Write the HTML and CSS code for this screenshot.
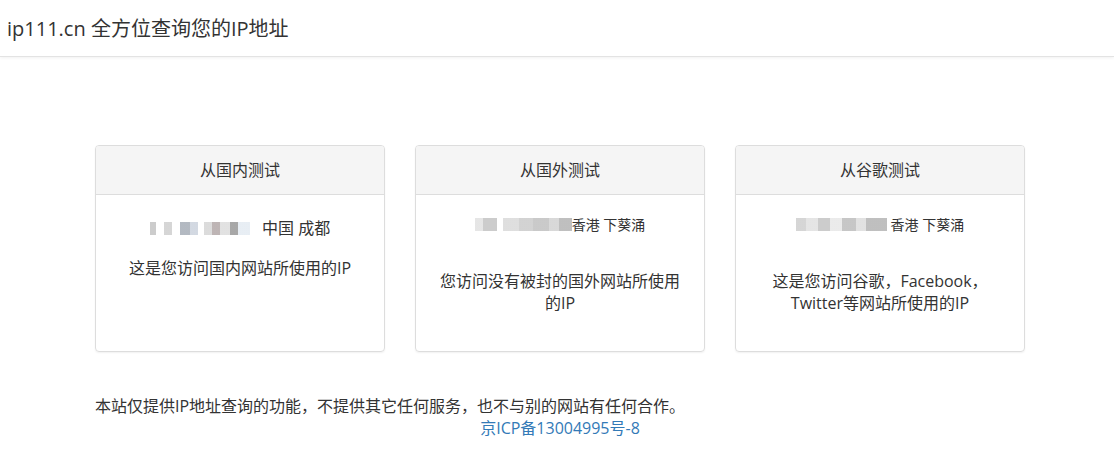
FILE: index.html
```html
<!DOCTYPE html>
<html lang="zh-CN">
<head>
  <meta charset="UTF-8" />
  <title>ip111.cn 全方位查询您的IP地址</title>
  <link rel="stylesheet" href="styles.css">
</head>
<body>
  <div class="topbar">
    <span class="brand">ip111.cn 全方位查询您的IP地址</span>
  </div>

  <div class="container">
    <div class="cards">
      <div class="card">
        <div class="card-head">从国内测试</div>
        <div class="card-body">
          <p class="ip"><span class="mask mask-a"></span> 中国 成都</p>
          <p class="desc">这是您访问国内网站所使用的IP</p>
        </div>
      </div>

      <div class="card">
        <div class="card-head">从国外测试</div>
        <div class="card-body">
          <p class="ip small"><span class="mask mask-b"></span>香港 下葵涌</p>
          <p class="desc far">您访问没有被封的国外网站所使用的IP</p>
        </div>
      </div>

      <div class="card">
        <div class="card-head">从谷歌测试</div>
        <div class="card-body">
          <p class="ip small"><span class="mask mask-c"></span> 香港 下葵涌</p>
          <p class="desc far">这是您访问谷歌，Facebook，<br>Twitter等网站所使用的IP</p>
        </div>
      </div>
    </div>

    <p class="notice">本站仅提供IP地址查询的功能，不提供其它任何服务，也不与别的网站有任何合作。</p>
    <p class="beian"><a href="#">京ICP备13004995号-8</a></p>
  </div>
</body>
</html>
```

FILE: styles.css
```css
body {
  margin: 0;
  background: #fff;
  color: #333;
  font-family: "Open Sans", "Noto Sans CJK SC", sans-serif;
  font-size: 16px;
  line-height: 22px;
}

.topbar {
  height: 57px;
  border-bottom: 1px solid #e3e3e3;
  box-shadow: 0 1px 3px rgba(0, 0, 0, 0.06);
  display: flex;
  align-items: center;
  padding-left: 7px;
  padding-top: 2px;
  box-sizing: border-box;
}

.brand {
  font-size: 20px;
  color: #333;
}

.container {
  width: 930px;
  margin-left: 95px;
  padding-top: 88px;
}

.cards {
  display: grid;
  grid-template-columns: repeat(3, 290px);
  gap: 30px;
}

.card {
  height: 207px;
  border: 1px solid #ddd;
  border-radius: 4px;
  box-shadow: 0 1px 2px rgba(0, 0, 0, 0.06);
  box-sizing: border-box;
  overflow: hidden;
}

.card-head {
  height: 48px;
  background: #f5f5f5;
  border-bottom: 1px solid #ddd;
  display: flex;
  align-items: center;
  justify-content: center;
  font-size: 16px;
}

.card-body {
  text-align: center;
  padding: 22px 20px 0;
}

.card-body p {
  margin: 0;
}

.ip {
  font-size: 16px;
  height: 22px;
}

.ip.small {
  font-size: 14px;
  margin-top: -3px;
}

.mask {
  display: inline-block;
  height: 13px;
  vertical-align: -1px;
  opacity: 0.75;
}

.mask-a {
  width: 108px;
  background: linear-gradient(90deg, #bbb 0 6px, #fff 6px 14px, #c8c8c8 14px 22px, #fff 22px 30px,
    #9aa2ad 30px 40px, #c4ccd8 40px 48px, #fff 48px 54px, #d0d0d0 54px 62px, #a89c9c 62px 70px,
    #d8d8d8 70px 80px, #8a8a8a 80px 88px, #e0e8f0 88px 100px, #fff 100px);
}

.mask-b {
  width: 97px;
  background: linear-gradient(90deg, #ddd 0 8px, #bbb 8px 22px, #fff 22px 28px, #d4d4d4 28px 44px,
    #c4c4c4 44px 58px, #b8b8b8 58px 74px, #ccc 74px 84px, #aaa 84px 97px);
}

.mask-c {
  width: 91px;
  background: linear-gradient(90deg, #c8c8c8 0 10px, #dcdcdc 10px 22px, #bbb 22px 34px, #e4e4e4 34px 46px,
    #b4b4b4 46px 60px, #d8d8d8 60px 70px, #aaa 70px 91px);
}

.desc {
  margin-top: 18px !important;
  font-size: 16px;
}

.desc.far {
  margin-top: 34px !important;
}

.notice {
  margin: 43px 0 0;
  font-size: 16px;
}

.beian {
  margin: 0;
  text-align: center;
  font-size: 16px;
}

.beian a {
  color: #337ab7;
  text-decoration: none;
}
```
